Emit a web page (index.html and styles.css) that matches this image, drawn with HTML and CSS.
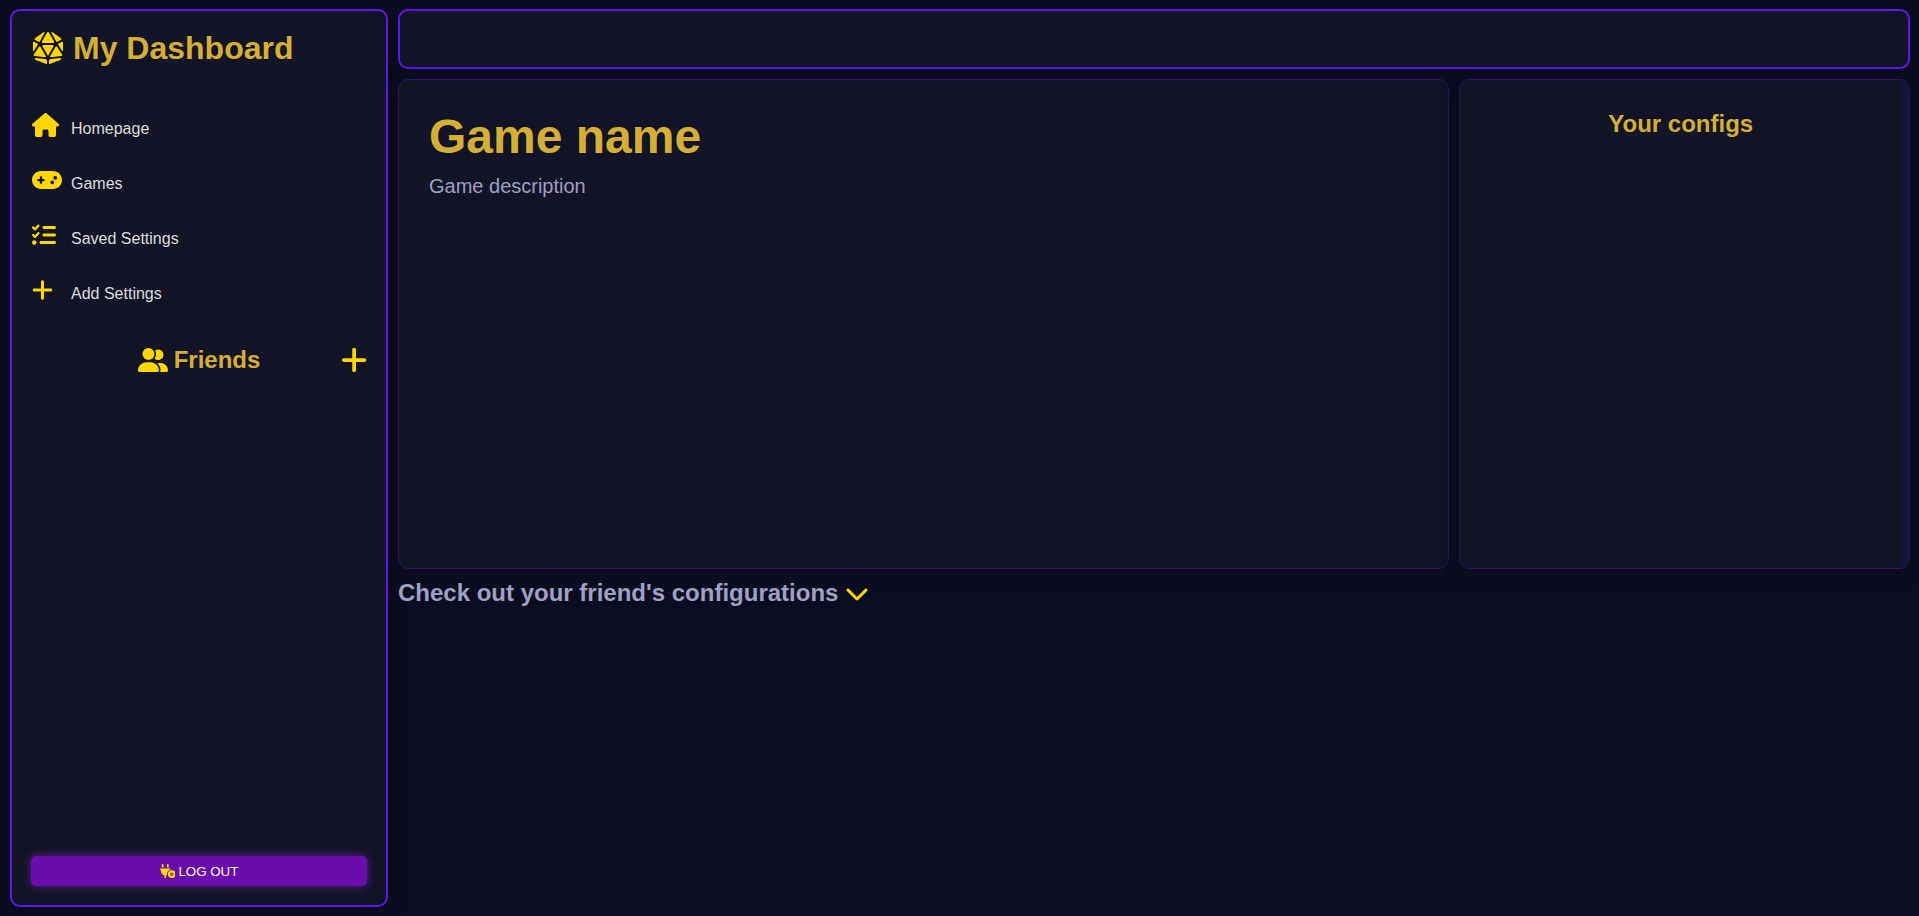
FILE: index.html
```html
<!DOCTYPE html>
<html lang="en">
<head>
<meta charset="utf-8">
<meta name="viewport" content="width=device-width, initial-scale=1">
<title>My Dashboard</title>
<link rel="stylesheet" href="styles.css">
</head>
<body>
<div class="layout">
  <aside class="sidebar panel panel-bright">
    <h1 class="brand">
      <svg class="icon brand-icon" viewBox="0 0 512 512" aria-hidden="true"><path d="M48.7 125.8l53.2 31.9c7.8 4.7 17.8 2 22.2-5.9L201.6 12.1c3-5.4-.9-12.1-7.1-12.1c-1.6 0-3.2 .5-4.6 1.4L47.9 98.8c-9.6 6.6-9.2 20.9 .8 26.9zM16 171.7l0 123.5c0 8 10.4 11 14.7 4.4l60-92c5-7.6 2.6-17.8-5.2-22.5L40.2 158C29.6 151.6 16 159.3 16 171.7zM310.4 12.1l77.5 139.6c4.4 7.9 14.5 10.6 22.2 5.9l53.2-31.9c10-6 10.4-20.3 .8-26.9L322.1 1.4c-1.4-.9-3-1.4-4.6-1.4c-6.2 0-10.1 6.7-7.1 12.1zM496 171.7c0-12.4-13.6-20.1-24.2-13.7l-45.3 27.2c-7.8 4.7-10.1 14.9-5.2 22.5l60 92c4.3 6.7 14.7 3.6 14.7-4.4l0-123.5zm-49.3 246L286.1 436.6c-8.1 .9-14.1 7.8-14.1 15.9l0 52.8c0 3.7 3 6.8 6.8 6.8c.8 0 1.6-.1 2.4-.4l172.7-64c6.1-2.2 10.1-8 10.1-14.5c0-9.3-8.1-16.5-17.3-15.4zM233.2 512c3.7 0 6.8-3 6.8-6.8l0-52.6c0-8.1-6.1-14.9-14.1-15.9l-160.6-19c-9.2-1.1-17.3 6.1-17.3 15.4c0 6.5 4 12.3 10.1 14.5l172.7 64c.8 .3 1.6 .4 2.4 .4zM41.7 382.9l170.9 20.2c7.8 .9 13.4-7.5 9.5-14.3l-85.7-150c-5.9-10.4-20.7-10.8-27.3-.8L30.2 358.2c-6.5 9.9-.3 23.3 11.5 24.7zm439.6-24.8L402.9 238.1c-6.5-10-21.4-9.6-27.3 .8L290.2 388.5c-3.9 6.8 1.6 15.2 9.5 14.3l170.1-20c11.8-1.4 18-14.7 11.5-24.6zm-216.9 11l78.4-137.2c6.1-10.7-1.6-23.9-13.9-23.9l-145.7 0c-12.3 0-20 13.3-13.9 23.9l78.4 137.2c3.7 6.4 13 6.4 16.7 0zM174.4 176l163.2 0c12.2 0 19.9-13.1 14-23.8l-80-144c-2.8-5.1-8.2-8.2-14-8.2l-3.2 0c-5.8 0-11.2 3.2-14 8.2l-80 144c-5.9 10.7 1.8 23.8 14 23.8z"/></svg>
      <span>My Dashboard</span>
    </h1>
    <nav class="nav">
      <a class="nav-link" href="#home">
        <svg class="icon nav-icon" viewBox="0 0 576 512" aria-hidden="true"><path d="M575.8 255.5c0 18-15 32.1-32 32.1h-32l.7 160.2c0 2.7-.2 5.4-.5 8.1V472c0 22.1-17.9 40-40 40H456c-1.1 0-2.2 0-3.3-.1c-1.4 .1-2.8 .1-4.2 .1H416 392c-22.1 0-40-17.9-40-40V448 384c0-17.7-14.3-32-32-32H256c-17.7 0-32 14.3-32 32v64 24c0 22.1-17.9 40-40 40H160 128.1c-1.5 0-3-.1-4.5-.2c-1.2 .1-2.4 .2-3.6 .2H104c-22.1 0-40-17.9-40-40V360c0-.9 0-1.9 .1-2.8V287.6H32c-18 0-32-14-32-32.1c0-9 3-17 10-24L266.4 8c7-7 15-8 22-8s15 2 21 7L564.8 231.5c8 7 12 15 11 24z"/></svg>
        <span>Homepage</span>
      </a>
      <a class="nav-link" href="#games">
        <svg class="icon nav-icon" viewBox="0 0 640 512" aria-hidden="true"><path d="M192 64C86 64 0 150 0 256S86 448 192 448H448c106 0 192-86 192-192s-86-192-192-192H192zM496 168a40 40 0 1 1 0 80 40 40 0 1 1 0-80zM392 304a40 40 0 1 1 80 0 40 40 0 1 1 -80 0zM168 200c0-13.3 10.7-24 24-24s24 10.7 24 24v32h32c13.3 0 24 10.7 24 24s-10.7 24-24 24H216v32c0 13.3-10.7 24-24 24s-24-10.7-24-24V280H136c-13.3 0-24-10.7-24-24s10.7-24 24-24h32V200z"/></svg>
        <span>Games</span>
      </a>
      <a class="nav-link" href="#saved">
        <svg class="icon nav-icon" viewBox="0 0 512 512" aria-hidden="true"><path d="M152.1 38.200c9.900 8.900 10.700 24 1.800 33.900l-72 80c-4.400 4.900-10.600 7.800-17.200 7.900s-12.900-2.400-17.600-7L7 113C-2.300 103.600-2.300 88.400 7 79s24.600-9.400 33.900 0l22.100 22.100 55.100-61.200c8.900-9.900 24-10.700 33.900-1.800zm0 160c9.900 8.900 10.700 24 1.800 33.900l-72 80c-4.400 4.900-10.600 7.800-17.200 7.900s-12.900-2.400-17.600-7L7 273c-9.400-9.400-9.400-24.600 0-33.900s24.600-9.400 33.900 0l22.100 22.100 55.100-61.200c8.900-9.900 24-10.700 33.900-1.800zM224 96c0-17.700 14.300-32 32-32H480c17.700 0 32 14.300 32 32s-14.300 32-32 32H256c-17.700 0-32-14.300-32-32zm0 160c0-17.700 14.300-32 32-32H480c17.700 0 32 14.300 32 32s-14.300 32-32 32H256c-17.700 0-32-14.300-32-32zM160 416c0-17.700 14.300-32 32-32H480c17.700 0 32 14.300 32 32s-14.300 32-32 32H192c-17.700 0-32-14.300-32-32zM48 368a48 48 0 1 1 0 96 48 48 0 1 1 0-96z"/></svg>
        <span>Saved Settings</span>
      </a>
      <a class="nav-link" href="#add">
        <svg class="icon nav-icon" viewBox="0 0 448 512" aria-hidden="true"><path d="M256 80c0-17.700-14.300-32-32-32s-32 14.300-32 32V224H48c-17.700 0-32 14.300-32 32s14.300 32 32 32H192V432c0 17.700 14.300 32 32 32s32-14.300 32-32V288H400c17.700 0 32-14.300 32-32s-14.300-32-32-32H256V80z"/></svg>
        <span>Add Settings</span>
      </a>
    </nav>
    <div class="friends">
      <h2 class="friends-title">
        <svg class="icon friends-icon" viewBox="0 0 640 512" aria-hidden="true"><path d="M96 128a128 128 0 1 1 256 0A128 128 0 1 1 96 128zM0 482.300C0 383.800 79.800 304 178.300 304h91.400C368.200 304 448 383.800 448 482.300c0 16.400-13.300 29.700-29.700 29.700H29.700C13.300 512 0 498.700 0 482.300zM609.300 512H471.400c5.400-9.400 8.600-20.300 8.600-32v-8c0-60.700-27.100-115.200-69.800-151.800c2.400-.1 4.700-.2 7.100-.2h61.400C567.800 320 640 392.200 640 481.300c0 17-13.800 30.700-30.700 30.700zM432 256c-31 0-59-12.600-79.300-32.900C372.400 196.500 384 163.600 384 128c0-26.800-6.600-52.100-18.300-74.300C384.300 40.100 407.200 32 432 32c61.900 0 112 50.100 112 112s-50.100 112-112 112z"/></svg>
        <span>Friends</span>
      </h2>
      <button class="icon-button friends-add" type="button" aria-label="Add friend">
        <svg class="icon add-icon" viewBox="0 0 448 512" aria-hidden="true"><path d="M256 80c0-17.700-14.300-32-32-32s-32 14.300-32 32V224H48c-17.700 0-32 14.300-32 32s14.300 32 32 32H192V432c0 17.700 14.300 32 32 32s32-14.300 32-32V288H400c17.700 0 32-14.300 32-32s-14.300-32-32-32H256V80z"/></svg>
      </button>
    </div>
    <button class="logout" type="button">
      <svg class="icon logout-icon" viewBox="0 0 576 512" aria-hidden="true"><path fill-rule="evenodd" d="M96 0C78.300 0 64 14.300 64 32v96h64V32c0-17.700-14.300-32-32-32zM288 0c-17.700 0-32 14.300-32 32v96h64V32c0-17.700-14.300-32-32-32zM32 160c-17.700 0-32 14.300-32 32s14.300 32 32 32v32c0 77.400 55 142 128 156.800V480c0 17.700 14.300 32 32 32s32-14.300 32-32v-67.200c12.300-2.500 24.100-6.400 35.100-11.500c-2.100-10.800-3.100-21.900-3.100-33.300c0-80.300 53.800-148 127.300-169.200c.5-2.200 .7-4.500 .7-6.800c0-17.700-14.300-32-32-32H32zM432 224a144 144 0 1 1 0 288 144 144 0 1 1 0-288zM432 308a60 60 0 1 0 0 120 60 60 0 1 0 0-120z"/><circle cx="432" cy="368" r="26"/></svg>
      <span>LOG OUT</span>
    </button>
  </aside>

  <main class="main">
    <header class="topbar panel panel-bright"></header>
    <div class="cards">
      <section class="game panel">
        <h2 class="game-title">Game name</h2>
        <p class="game-description">Game description</p>
      </section>
      <section class="configs panel">
        <h2 class="configs-title">Your configs</h2>
        <div class="scroll-track"></div>
      </section>
    </div>
    <div class="more">
      <h2 class="more-title">Check out your friend's configurations</h2>
      <button class="icon-button" type="button" aria-label="Show friend's configurations">
        <svg class="icon chevron-icon" viewBox="0 0 512 512" aria-hidden="true"><path d="M233.400 406.600c12.500 12.500 32.800 12.500 45.300 0l192-192c12.500-12.500 12.500-32.800 0-45.300s-32.800-12.500-45.300 0L256 338.700 86.600 169.400c-12.500-12.500-32.800-12.500-45.300 0s-12.500 32.800 0 45.300l192 192z"/></svg>
      </button>
    </div>
  </main>
</div>
</body>
</html>
```

FILE: styles.css
```css
:root {
  --page: #0c0d20;
  --panel: #131426;
  --bright: #6016f0;
  --dim: #2d1266;
  --gold: #d4af37;
  --yellow: #ffd700;
  --muted: #a09fc4;
}

* {
  box-sizing: border-box;
}

body {
  margin: 0;
  background: var(--page);
  font-family: "Liberation Sans", Arial, sans-serif;
  color: #dddddd;
}

h1, h2, p {
  margin: 0;
}

.layout {
  display: grid;
  grid-template-columns: 1fr 4fr;
  gap: 10px;
  min-height: 100vh;
  padding: 9px 9px 9px 10px;
}

.panel {
  background: var(--panel);
  border: 1px solid var(--dim);
  border-radius: 10px;
  box-shadow: 0 4px 20px rgba(0, 0, 0, 0.2);
}

.panel-bright {
  border: 2px solid var(--bright);
}

.icon {
  display: block;
  flex: none;
  fill: var(--yellow);
}

.icon-button {
  display: block;
  padding: 0;
  border: 0;
  background: none;
  cursor: pointer;
}

/* Sidebar */
.sidebar {
  display: flex;
  flex-direction: column;
  padding: 19px;
}

.brand {
  display: flex;
  align-items: center;
  gap: 9px;
  padding: 0 1px;
  color: var(--gold);
  font-size: 32px;
  line-height: 36px;
}

.brand-icon {
  width: 32px;
  height: 32px;
}

.nav {
  display: flex;
  flex-direction: column;
  gap: 29px;
  margin-top: 47px;
  padding: 0 1px;
}

.nav-link {
  display: grid;
  grid-template-columns: 31px 1fr;
  column-gap: 8px;
  align-items: end;
  color: inherit;
  font-size: 16px;
  line-height: 20px;
  height: 26px;
  text-decoration: none;
}

.nav-icon {
  height: 24px;
  align-self: start;
}

.friends {
  display: grid;
  grid-template-columns: 1fr auto 1fr;
  align-items: center;
  margin-top: 41px;
}

.friends-title {
  grid-column: 2;
  display: flex;
  align-items: center;
  gap: 6px;
  color: var(--gold);
  font-size: 24px;
  line-height: 28px;
}

.friends-icon {
  height: 24px;
}

.friends-add {
  justify-self: end;
}

.add-icon {
  height: 30px;
}

.logout {
  display: flex;
  align-items: center;
  justify-content: center;
  gap: 3px;
  height: 30px;
  margin-top: auto;
  padding: 0;
  border: 0;
  border-radius: 5px;
  background: #6a0dad;
  box-shadow: 0 0 10px rgba(138, 43, 226, 0.6);
  color: #ffffff;
  font-family: inherit;
  cursor: pointer;
}

.logout-icon {
  height: 14px;
}

/* Main column */
.main {
  display: flex;
  flex-direction: column;
  gap: 10px;
}

.topbar {
  height: 60px;
}

.cards {
  display: grid;
  grid-template-columns: 7fr 3fr;
  gap: 10px;
  min-height: 490px;
}

.game {
  padding: 29px 30px;
}

.game-title {
  color: var(--gold);
  font-size: 48px;
  line-height: 56px;
}

.game-description {
  margin-top: 9px;
  color: var(--muted);
  font-size: 20px;
  line-height: 24px;
}

.configs {
  display: flex;
  overflow: hidden;
}

.configs-title {
  flex: 1;
  padding-top: 30px;
  color: var(--gold);
  font-size: 24px;
  line-height: 28px;
  text-align: center;
}

.scroll-track {
  width: 8px;
  background: #17153a;
}

.more {
  display: flex;
  align-items: center;
  gap: 7px;
}

.more-title {
  color: var(--muted);
  font-size: 24px;
  line-height: 28px;
}

.chevron-icon {
  height: 24px;
}
```
